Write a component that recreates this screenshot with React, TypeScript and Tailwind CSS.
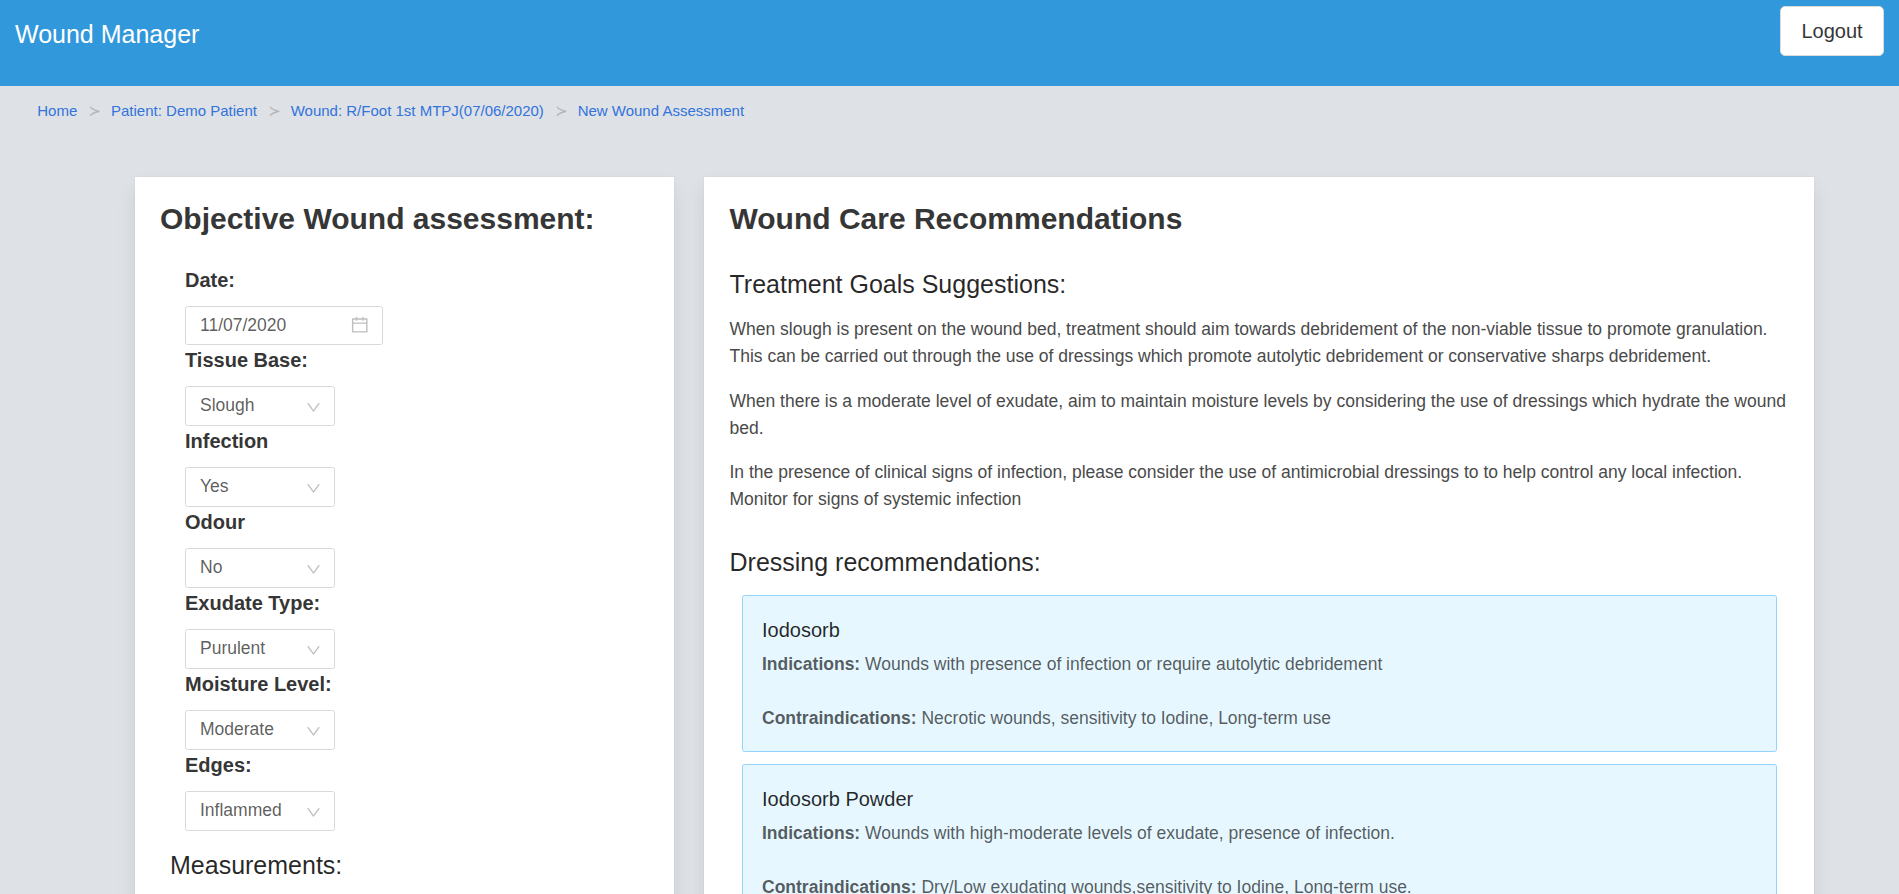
import React from "react";

const crumbs = [
  "Home",
  "Patient: Demo Patient",
  "Wound: R/Foot 1st MTPJ(07/06/2020)",
  "New Wound Assessment",
];

const fields = [
  { label: "Tissue Base:", value: "Slough" },
  { label: "Infection", value: "Yes" },
  { label: "Odour", value: "No" },
  { label: "Exudate Type:", value: "Purulent" },
  { label: "Moisture Level:", value: "Moderate" },
  { label: "Edges:", value: "Inflammed" },
];

const goals = [
  "When slough is present on the wound bed, treatment should aim towards debridement of the non-viable tissue to promote granulation. This can be carried out through the use of dressings which promote autolytic debridement or conservative sharps debridement.",
  "When there is a moderate level of exudate, aim to maintain moisture levels by considering the use of dressings which hydrate the wound bed.",
  "In the presence of clinical signs of infection, please consider the use of antimicrobial dressings to to help control any local infection. Monitor for signs of systemic infection",
];

const dressings = [
  {
    name: "Iodosorb",
    indications: "Wounds with presence of infection or require autolytic debridement",
    contraindications: "Necrotic wounds, sensitivity to Iodine, Long-term use",
  },
  {
    name: "Iodosorb Powder",
    indications: "Wounds with high-moderate levels of exudate, presence of infection.",
    contraindications: "Dry/Low exudating wounds,sensitivity to Iodine, Long-term use.",
  },
];

function CalendarIcon() {
  return (
    <svg className="size-[17.5px]" viewBox="64 64 896 896" fill="#bfbfbf">
      <path d="M880 184H712v-64c0-4.400-3.600-8-8-8h-56c-4.400 0-8 3.600-8 8v64H384v-64c0-4.400-3.600-8-8-8h-56c-4.400 0-8 3.600-8 8v64H144c-17.700 0-32 14.300-32 32v664c0 17.700 14.300 32 32 32h736c17.700 0 32-14.300 32-32V216c0-17.700-14.300-32-32-32zm-40 656H184V460h656v380zM184 392V256h128v48c0 4.400 3.600 8 8 8h56c4.400 0 8-3.600 8-8v-48h256v48c0 4.400 3.600 8 8 8h56c4.400 0 8-3.600 8-8v-48h128v136H184z" />
    </svg>
  );
}

function DownIcon() {
  return (
    <svg className="size-[15px]" viewBox="64 64 896 896" fill="#bfbfbf">
      <path d="M884 256h-75c-5.100 0-9.900 2.500-12.900 6.600L512 654.200 227.900 262.600c-3-4.100-7.800-6.600-12.900-6.600h-75c-6.500 0-10.300 7.400-6.500 12.700l352.600 486.100c12.800 17.600 39 17.600 51.700 0l352.600-486.100c3.900-5.300.1-12.700-6.400-12.700z" />
    </svg>
  );
}

function FieldLabel({ children }: { children: React.ReactNode }) {
  return <label className="mb-[11px] block text-[20px] leading-[30px] font-bold text-[#363636]">{children}</label>;
}

export default function App() {
  return (
    <div className="h-[894px] overflow-hidden bg-[#dee2e6] font-['Liberation_Sans',Arial,sans-serif] text-[17.5px] leading-[27px] text-[#4a4a4a]">
      <header className="flex h-[86px] items-start justify-between bg-[#3298dc] pr-[15px] pl-[15px]">
        <h1 className="pt-[15px] text-[25px] leading-[38px] text-white">Wound Manager</h1>
        <button className="mt-[6px] h-[50px] w-[104px] rounded-[5px] border border-[#dbdbdb] bg-white text-[20px] leading-[30px] text-[#363636]">
          Logout
        </button>
      </header>

      <nav className="flex h-[91px] items-start pt-[14px] pl-[26px] text-[15px] leading-[22.5px] text-[#3273dc]">
        {crumbs.map((crumb, i) => (
          <div key={crumb} className="flex">
            {i > 0 && <span className="w-[11.25px] text-center font-['DejaVu_Sans',sans-serif] text-[#b5b5b5]">≻</span>}
            <a className="px-[11.25px]">{crumb}</a>
          </div>
        ))}
      </nav>

      <main className="flex items-start gap-[30px] pl-[135px]">
        <section className="h-[900px] w-[539px] bg-white px-[25px] pt-[25px] shadow-[0_10px_20px_-2px_rgba(10,10,10,0.1),0_0_0_1px_rgba(10,10,10,0.02)]">
          <h2 className="text-[30px] leading-[33.75px] font-bold text-[#363636]">Objective Wound assessment:</h2>
          <div className="pt-[29.25px] pl-[25px]">
            <FieldLabel>Date:</FieldLabel>
            <div className="flex h-[39px] w-[198px] items-center justify-between rounded-[2.5px] border border-[#d9d9d9] pr-[14px] pl-[14px] text-black/65">
              <span>11/07/2020</span>
              <span className="pb-[2px]">
                <CalendarIcon />
              </span>
            </div>
            {fields.map((field) => (
              <div key={field.label}>
                <FieldLabel>{field.label}</FieldLabel>
                <div className="flex h-[40px] w-[150px] items-center justify-between rounded-[2.5px] border border-[#d9d9d9] pr-[13px] pl-[14px] text-black/65">
                  <span className="pb-[2px]">{field.value}</span>
                  <span className="pt-[3px]">
                    <DownIcon />
                  </span>
                </div>
              </div>
            ))}
          </div>
          <h3 className="pt-[17px] pl-[10px] text-[25px] leading-[35px] text-black/85">Measurements:</h3>
        </section>

        <section className="h-[900px] w-[1110px] bg-white pr-[24.5px] pl-[25.5px] pt-[25px] shadow-[0_10px_20px_-2px_rgba(10,10,10,0.1),0_0_0_1px_rgba(10,10,10,0.02)]">
          <h2 className="text-[30px] leading-[33.75px] font-bold text-[#363636]">Wound Care Recommendations</h2>
          <h3 className="pt-[31.25px] pb-[14px] text-[25px] leading-[35px] text-black/85">Treatment Goals Suggestions:</h3>
          {goals.map((goal) => (
            <p key={goal} className="mb-[17.5px]">
              {goal}
            </p>
          ))}
          <h3 className="pt-[14px] pb-[15.5px] text-[25px] leading-[35px] text-black/85">Dressing recommendations:</h3>
          <div className="flex flex-col gap-[12px] pr-[12.5px] pl-[12px]">
            {dressings.map((d) => (
              <article key={d.name} className="h-[157px] rounded-[2.5px] border border-[#91d5ff] bg-[#e6f7ff] px-[19.5px] pt-[21px] text-black/65">
                <h4 className="mb-[7px] text-[20px] text-black/85">{d.name}</h4>
                <p className="mb-[27px]">
                  <strong className="font-bold">Indications:</strong> {d.indications}
                </p>
                <p>
                  <strong className="font-bold">Contraindications:</strong> {d.contraindications}
                </p>
              </article>
            ))}
          </div>
        </section>
      </main>
    </div>
  );
}
